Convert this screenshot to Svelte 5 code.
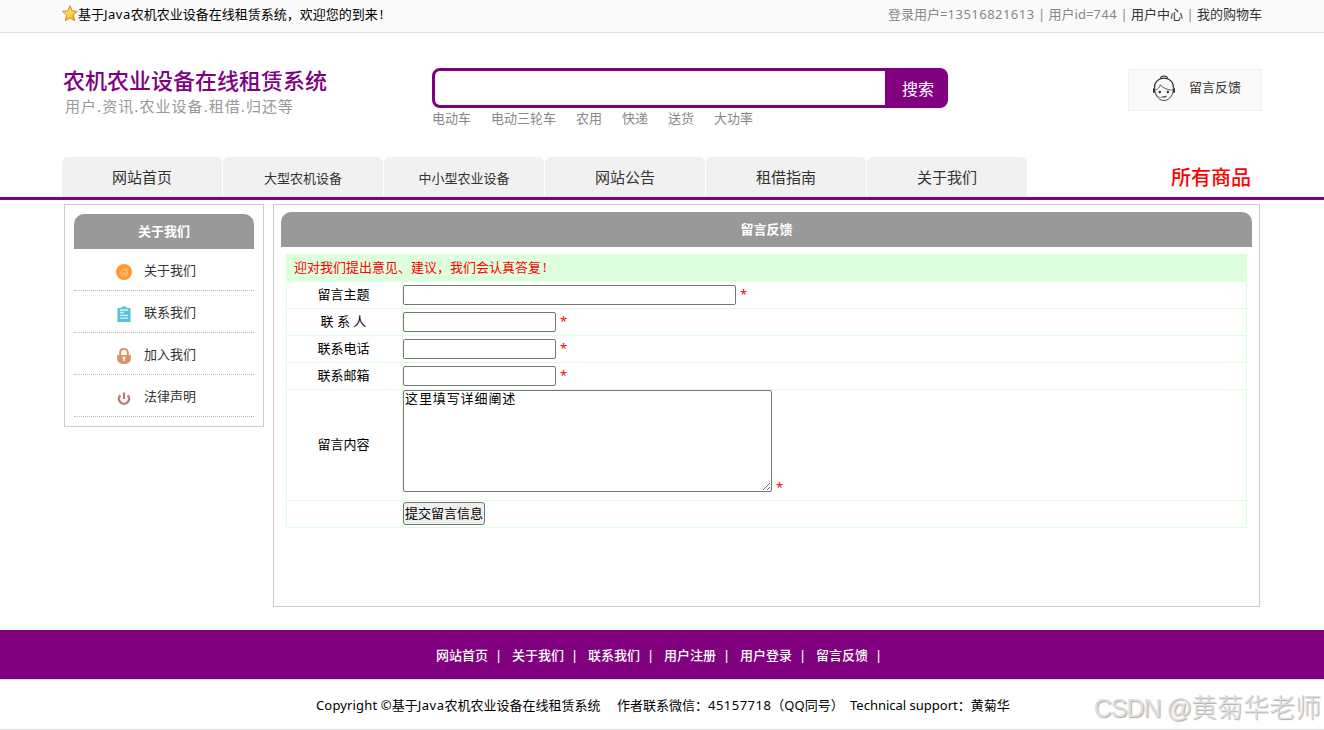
<script lang="ts">
  const keywords = ["电动车", "电动三轮车", "农用", "快递", "送货", "大功率"];

  const tabs = [
    { label: "网站首页", small: false },
    { label: "大型农机设备", small: true },
    { label: "中小型农业设备", small: true },
    { label: "网站公告", small: false },
    { label: "租借指南", small: false },
    { label: "关于我们", small: false },
  ];

  const sideLinks = [
    { label: "关于我们", icon: "home" },
    { label: "联系我们", icon: "board" },
    { label: "加入我们", icon: "lock" },
    { label: "法律声明", icon: "power" },
  ];

  const fields = [
    { id: "title", label: "留言主题", wide: true },
    { id: "name", label: "联 系 人", wide: false },
    { id: "phone", label: "联系电话", wide: false },
    { id: "email", label: "联系邮箱", wide: false },
  ];

  const footLinks = ["网站首页", "关于我们", "联系我们", "用户注册", "用户登录", "留言反馈"];

  let content = "这里填写详细阐述";
</script>

<div class="topbar">
  <div class="wrap topbar-inner">
    <div class="welcome">
      <svg width="16" height="17" viewBox="0 0 16 17">
        <defs>
          <linearGradient id="star" x1="0" y1="0" x2="1" y2="1">
            <stop offset="0" stop-color="#fff3a0" />
            <stop offset="0.5" stop-color="#ffd24a" />
            <stop offset="1" stop-color="#f09a20" />
          </linearGradient>
        </defs>
        <path
          d="M8 .8l2.1 5 5.2.5-3.9 3.7 1.3 5.7L8 12.8l-4.7 2.9L4.6 10 .7 6.3l5.2-.5z"
          fill="url(#star)"
          stroke="#c98d28"
          stroke-width="1"
          stroke-linejoin="round"
        />
      </svg>
      <span>基于<span class="latin">Java</span>农机农业设备在线租赁系统，欢迎您的到来<span class="mark">!</span></span>
    </div>
    <div class="account">
      登录用户=<span class="num">13516821613</span> | 用户id=<span class="num">744</span> |
      <a href="#user">用户中心</a> | <a href="#cart">我的购物车</a>
    </div>
  </div>
</div>

<header class="wrap header">
  <div class="logo">
    <h1>农机农业设备在线租赁系统</h1>
    <p>用户.资讯.农业设备.租借.归还等</p>
  </div>
  <div class="search">
    <div class="search-box">
      <input type="text" aria-label="搜索" />
      <button>搜索</button>
    </div>
    <div class="keywords">
      {#each keywords as word}
        <a href="#search">{word}</a>
      {/each}
    </div>
  </div>
  <a class="feedback" href="#feedback">
    <svg width="24" height="27" viewBox="0 0 24 27" fill="none" stroke="#333" stroke-width="1.1">
      <path d="M8.3 3.500C9 .2 15 .2 15.700 3.500" fill="#ccc" />
      <path d="M2.600 13C2 7.500 6 3.300 12 3.300S22 7.500 21.400 13" />
      <path d="M3.300 17.500C4.500 22.500 8 25.500 12 25.500s7.500-3 8.700-8" stroke-width=".9" />
      <path d="M3.800 15c2.200-1 3.700-2.600 4.600-5.200 2.200 3 6 4.800 11.400 5.400" stroke-width=".8" />
      <path d="M2.200 13.300v4.400M21.800 13.300v4.400" stroke-width="2.400" />
      <path d="M3 18.500c1.400 2.800 4 4 7.500 4" stroke-width=".5" />
      <path d="M10.500 21.600c1.500.8 3 .4 4-.8" />
      <circle cx="7.800" cy="17" r=".7" fill="#333" />
      <circle cx="15.800" cy="17" r=".7" fill="#333" />
    </svg>
    <span>留言反馈</span>
  </a>
</header>

<nav class="nav">
  <div class="wrap nav-inner">
    {#each tabs as tab}
      <a class="tab" class:small={tab.small} href="#tab">{tab.label}</a>
    {/each}
    <a class="all" href="#all">所有商品</a>
  </div>
</nav>

<main class="wrap main">
  <aside class="side">
    <h2>关于我们</h2>
    {#each sideLinks as link}
      <a class="side-link" href="#about">
        <svg width="16" height="16" viewBox="0 0 16 16">
          {#if link.icon === "home"}
            <circle cx="8" cy="8" r="8" fill="#ff9a2e" />
            <path
              d="M4 8.500l4.200-3.700 3.600 2.400M5.400 8v3.800h1.800V9.300h2v2.500h1.700V7.500M10.800 4v2.500"
              fill="none"
              stroke="#ffbe7a"
              stroke-width="1.200"
            />
          {:else if link.icon === "board"}
            <path d="M1.500 2H5c.4-1 1.300-1.700 3-1.700s2.600.7 3 1.700h3.500v14h-13z" fill="#56c4d8" />
            <path d="M4 4h8M4 6.500h4M4 9.300h8M4 12.200h8" stroke="#d5f2f6" stroke-width="1.300" />
          {:else if link.icon === "lock"}
            <path d="M4.200 8V4.500c0-4.600 7.600-4.600 7.600 0V8" fill="none" stroke="#dd916a" stroke-width="2" />
            <path d="M1.200 7h13.600v3.500c0 3.300-2.600 5.500-6.800 5.500s-6.800-2.200-6.800-5.500z" fill="#dd916a" />
            <circle cx="8" cy="10" r="1.400" fill="#fff" />
            <path d="M8 10v3" stroke="#fff" stroke-width="1.500" />
          {:else}
            <path d="M4.300 5.400a5 5 0 1 0 7.400 0" fill="none" stroke="#b87e7e" stroke-width="2.500" />
            <path d="M8 2.500V9" stroke="#b87e7e" stroke-width="2.200" />
          {/if}
        </svg>
        <span>{link.label}</span>
      </a>
    {/each}
  </aside>

  <section class="panel">
    <h2>留言反馈</h2>
    <form class="form">
      <div class="notice">迎对我们提出意见、建议，我们会认真答复<span class="mark">!</span></div>
      {#each fields as field}
        <div class="row">
          <label for={field.id}>{field.label}</label>
          <div class="cell">
            <input type="text" id={field.id} class:wide={field.wide} />
            <span class="required">*</span>
          </div>
        </div>
      {/each}
      <div class="row tall">
        <label for="content">留言内容</label>
        <div class="cell">
          <textarea id="content" bind:value={content}></textarea>
          <span class="required">*</span>
        </div>
      </div>
      <div class="row">
        <label for="submit"></label>
        <div class="cell">
          <button id="submit" type="button">提交留言信息</button>
        </div>
      </div>
    </form>
  </section>
</main>

<footer>
  <div class="foot-nav">
    {#each footLinks as link}
      <a href="#foot">{link}</a><span class="bar">|</span>
    {/each}
  </div>
  <div class="copyright">
    <span class="owner"><span class="copy">Copyright ©</span>基于<span class="latin">Java</span>农机农业设备在线租赁系统</span>
    <span class="author">作者联系微信：<span class="num">45157718</span>（QQ同号）</span>
    <span class="support">Technical support：黄菊华</span>
  </div>
</footer>

<div class="watermark"><span>CSDN @</span>黄菊华老师</div>

<style>
  :global(body) {
    margin: 0;
    background: #fff;
    overflow: hidden;
    font: 13px/20px "Noto Sans", "Noto Sans CJK SC", sans-serif;
    color: #000;
  }

  a {
    color: #333;
    text-decoration: none;
  }

  h1,
  h2,
  p {
    margin: 0;
  }

  input,
  textarea,
  button {
    box-sizing: border-box;
    margin: 0;
    font-family: inherit;
  }

  .wrap {
    width: 1200px;
    margin: 0 auto;
  }

  .num {
    letter-spacing: 0.48px;
  }

  .latin {
    letter-spacing: 0.5px;
  }

  .mark {
    padding-left: 2px;
  }

  .copy {
    letter-spacing: 0.15px;
  }

  .topbar {
    height: 32px;
    background: #fafafa;
    border-bottom: 1px solid #ddd;
  }

  .topbar-inner {
    display: flex;
    justify-content: space-between;
    line-height: 28px;
    white-space: nowrap;
  }

  .welcome {
    display: flex;
  }

  .welcome svg {
    margin-top: 5px;
  }

  .account {
    color: #888;
  }

  .header {
    display: flex;
    height: 124px;
  }

  .logo {
    width: 370px;
    padding-top: 32px;
  }

  .logo h1 {
    padding-left: 1px;
    color: purple;
    font-size: 22px;
    font-weight: 500;
    line-height: 30px;
  }

  .logo p {
    padding-left: 3px;
    color: #999;
    font-size: 15px;
    line-height: 22px;
    letter-spacing: 1.06px;
  }

  .search {
    width: 516px;
    padding-top: 35px;
  }

  .search-box {
    display: flex;
    box-sizing: border-box;
    height: 40px;
    border: 3px solid purple;
    border-radius: 8px;
    background: purple;
  }

  .search-box input {
    width: 450px;
    border: none;
    border-radius: 5px 0 0 5px;
    outline: none;
  }

  .search-box button {
    flex: 1;
    padding: 0 0 0 6px;
    border: none;
    background: none;
    color: #fff;
    font-size: 16px;
  }

  .keywords {
    display: flex;
    gap: 20px;
  }

  .keywords a {
    color: #888;
  }

  .feedback {
    display: flex;
    box-sizing: border-box;
    width: 134px;
    height: 42px;
    margin: 36px 0 0 auto;
    padding-left: 23px;
    border: 1px solid #f0f0f0;
    background: #fafafa;
    line-height: 34px;
  }

  .feedback svg {
    margin: 5px 13px 0 0;
  }

  .nav {
    border-bottom: 3px solid purple;
  }

  .nav-inner {
    display: flex;
    gap: 1px;
    height: 40px;
  }

  .tab {
    width: 160px;
    border-radius: 6px 6px 0 0;
    background: #f1f1f1;
    font-size: 15px;
    line-height: 40px;
    text-align: center;
  }

  .tab.small {
    font-size: 13px;
    line-height: 42px;
  }

  .all {
    margin: 0 11px 0 auto;
    color: red;
    font-size: 20px;
    font-weight: 500;
    line-height: 42px;
  }

  .main {
    display: flex;
    align-items: flex-start;
    box-sizing: border-box;
    height: 430px;
    padding: 4px 2px 0;
    gap: 9px;
  }

  .side {
    width: 180px;
    padding: 9px;
    border: 1px solid #ccc;
  }

  h2 {
    height: 35px;
    border-radius: 10px 10px 0 0;
    background: #999;
    color: #fff;
    font-size: 13px;
    line-height: 35px;
    text-align: center;
  }

  .side-link {
    display: flex;
    height: 41px;
    padding-left: 42px;
    border-bottom: 1px dotted #bbb;
    line-height: 42px;
  }

  .side-link svg {
    margin: 15px 12px 0 0;
  }

  .panel {
    box-sizing: border-box;
    width: 987px;
    height: 403px;
    padding: 7px;
    border: 1px solid #ccc;
  }

  .form {
    width: 961px;
    margin: 7px 0 0 5px;
  }

  .notice {
    box-sizing: border-box;
    height: 28px;
    padding-left: 8px;
    background: #dfd;
    color: red;
    line-height: 26px;
  }

  .row {
    display: flex;
    box-sizing: border-box;
    height: 27px;
    border: 1px solid #dfd;
    border-top: none;
  }

  .row label {
    box-sizing: border-box;
    width: 116px;
    padding-right: 2px;
    border-right: 1px solid #dfd;
    line-height: 24px;
    text-align: center;
  }

  .cell {
    display: flex;
    align-items: center;
    gap: 4px;
  }

  .cell input {
    width: 153px;
    height: 20px;
    border: 1px solid #767676;
    border-radius: 2px;
  }

  .cell input.wide {
    width: 333px;
  }

  .required {
    color: red;
    line-height: 18px;
    margin-bottom: 2px;
  }

  .tall {
    height: 111px;
  }

  .tall label {
    line-height: 108px;
  }

  .tall .cell {
    align-items: flex-start;
  }

  .tall .required {
    margin-top: 88px;
  }

  textarea {
    width: 369px;
    height: 102px;
    padding: 0 1px;
    border: 1px solid #767676;
    border-radius: 2px;
    font-size: 13px;
    line-height: 14px;
    letter-spacing: 0.9px;
  }

  .cell button {
    width: 82px;
    height: 23px;
    margin-bottom: 2px;
    padding: 0;
    border: 1px solid #767676;
    border-radius: 3px;
    background: #efefef;
    font-size: 13px;
    line-height: 20px;
  }

  .foot-nav {
    display: flex;
    box-sizing: border-box;
    height: 50px;
    padding-left: 436px;
    border-bottom: 1px solid #ddd;
    background: purple;
    color: #fff;
    font-weight: 500;
    line-height: 51px;
  }

  .foot-nav a {
    width: 52px;
    color: #fff;
  }

  .bar {
    width: 24px;
    text-indent: 7px;
  }

  .copyright {
    display: flex;
    height: 49px;
    padding-left: 316px;
    border-bottom: 1px solid #ddd;
    line-height: 50px;
    white-space: nowrap;
  }

  .owner {
    width: 301px;
  }

  .author {
    width: 233px;
  }

  .watermark {
    position: absolute;
    right: 3px;
    bottom: 5px;
    color: #dedede;
    font: 26px/34px "Liberation Sans", "Noto Sans CJK SC", sans-serif;
    font-weight: 300;
    text-shadow: 1px 1px 1px #aaa;
    white-space: nowrap;
  }

  .watermark span {
    font-size: 25px;
    letter-spacing: -1px;
  }
</style>
